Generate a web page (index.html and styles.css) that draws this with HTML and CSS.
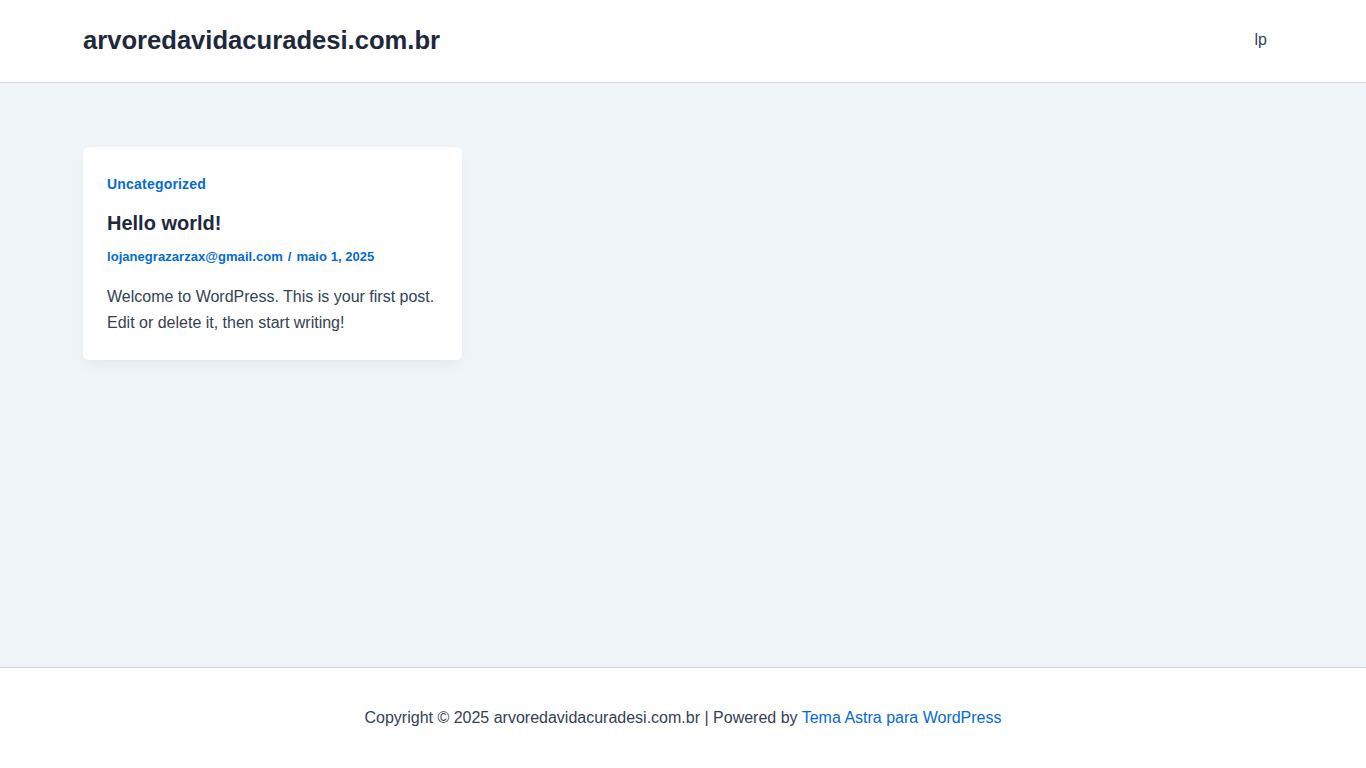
FILE: index.html
```html
<!DOCTYPE html>
<html lang="pt-BR">
<head>
<meta charset="utf-8">
<title>arvoredavidacuradesi.com.br</title>
<link rel="stylesheet" href="styles.css">
</head>
<body>
<div class="page">
  <header class="site-header">
    <div class="container header-inner">
      <a class="site-title" href="#">arvoredavidacuradesi.com.br</a>
      <nav class="main-nav">
        <a class="menu-link" href="#">lp</a>
      </nav>
    </div>
  </header>
  <main class="site-main">
    <div class="container">
      <article class="post-card">
        <div class="cat"><a href="#">Uncategorized</a></div>
        <h2 class="post-title"><a href="#">Hello world!</a></h2>
        <div class="meta"><a href="#">lojanegrazarzax@gmail.com</a><span class="sep">/</span><a href="#">maio 1, 2025</a></div>
        <p class="excerpt">Welcome to WordPress. This is your first post. Edit or delete it, then start writing!</p>
      </article>
    </div>
  </main>
  <footer class="site-footer">
    <div class="container footer-inner">Copyright © 2025 arvoredavidacuradesi.com.br | Powered by <a href="#">Tema Astra para WordPress</a></div>
  </footer>
</div>
</body>
</html>
```
FILE: styles.css
```css
* { box-sizing: border-box; }
html, body { margin: 0; padding: 0; }
body {
  font-family: "Liberation Sans", Arial, sans-serif;
  font-size: 16px;
  color: #334155;
  background: #f0f5fa;
}
a { text-decoration: none; }
.page { min-height: 100vh; display: flex; flex-direction: column; }
.container { width: 1200px; margin: 0 auto; }

.site-header { background: #fff; border-bottom: 1px solid #d1d5db; }
.header-inner { height: 82px; display: flex; align-items: center; justify-content: space-between; }
.site-title { font-size: 25.6px; font-weight: 700; color: #1e293b; line-height: 1.2; margin-bottom: 2px; }
.main-nav { display: flex; align-self: stretch; align-items: center; padding-bottom: 2px; }
.menu-link { color: #334155; font-size: 16px; padding: 0 16px; line-height: 1.5; }

.site-main { flex: 1; padding-top: 64px; }
.post-card {
  width: 379px;
  background: #fff;
  border-radius: 6px;
  padding: 24px;
  box-shadow: 0 6px 15px -2px rgba(16, 24, 40, 0.06);
}
.cat { font-size: 14px; font-weight: 700; line-height: 26px; letter-spacing: 0.2px; }
.cat a, .meta a { color: #046bd2; }
.post-title { margin: 14px 0 0; font-size: 20px; line-height: 24px; font-weight: 700; }
.post-title a { color: #1e293b; }
.meta { margin-top: 12px; font-size: 13px; font-weight: 700; line-height: 20px; color: #046bd2; letter-spacing: 0.05px; }
.sep { margin: 0 5px; }
.excerpt { margin: 17px 0 0; font-size: 16px; line-height: 26px; color: #334155; }

.site-footer { background: #fff; border-top: 1px solid #d1d5db; padding: 38px 0 38px; }
.footer-inner { text-align: center; font-size: 16px; line-height: 24px; color: #334155; }
.footer-inner a { color: #046bd2; }
```
